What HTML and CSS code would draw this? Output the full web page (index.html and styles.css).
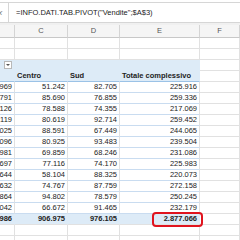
FILE: index.html
```html
<html>
<head>
<title>Pivot</title>
<link rel="stylesheet" href="styles.css">
</head>
<body>
	<div class="formula-bar">
		<span class="fx">fx</span>
		<div class="formula">=INFO.DATI.TAB.PIVOT("Vendite";$A$3)</div>
	</div>

	<div class="sheet">
		<div class="row col-head">
			<div>B</div><div>C</div><div>D</div><div>E</div><div>F</div>
		</div>
		<div class="row"><div></div><div></div><div></div><div></div><div></div></div>
		<div class="row"><div></div><div></div><div></div><div></div><div></div></div>
		<div class="row pv-top">
			<div class="c-filter"><span class="drop"></span></div><div></div><div></div><div></div><div class="f"></div>
		</div>
		<div class="row pv-head">
			<div>Nord</div><div>Centro</div><div>Sud</div><div>Totale complessivo</div><div class="f"></div>
		</div>
		<div class="row pv"><div>91.969</div><div>51.242</div><div>82.705</div><div>225.916</div><div class="f"></div></div>
		<div class="row pv"><div>96.791</div><div>85.690</div><div>76.855</div><div>259.336</div><div class="f"></div></div>
		<div class="row pv"><div>64.126</div><div>78.588</div><div>74.355</div><div>217.069</div><div class="f"></div></div>
		<div class="row pv"><div>86.119</div><div>80.619</div><div>92.714</div><div>259.452</div><div class="f"></div></div>
		<div class="row pv"><div>88.025</div><div>88.591</div><div>67.449</div><div>244.065</div><div class="f"></div></div>
		<div class="row pv"><div>65.096</div><div>80.925</div><div>93.483</div><div>239.504</div><div class="f"></div></div>
		<div class="row pv"><div>92.981</div><div>69.859</div><div>68.246</div><div>231.086</div><div class="f"></div></div>
		<div class="row pv"><div>74.697</div><div>77.116</div><div>74.170</div><div>225.983</div><div class="f"></div></div>
		<div class="row pv"><div>73.644</div><div>58.104</div><div>88.325</div><div>220.073</div><div class="f"></div></div>
		<div class="row pv"><div>109.632</div><div>74.767</div><div>87.759</div><div>272.158</div><div class="f"></div></div>
		<div class="row pv"><div>76.864</div><div>94.802</div><div>78.579</div><div>250.245</div><div class="f"></div></div>
		<div class="row pv"><div>74.042</div><div>66.672</div><div>91.465</div><div>232.179</div><div class="f"></div></div>
		<div class="row pv-total">
			<div>993.986</div><div>906.975</div><div>976.105</div>
			<div class="grand">2.877.066<span class="mark"></span></div>
			<div class="f"></div>
		</div>
		<div class="row"><div></div><div></div><div></div><div></div><div></div></div>
		<div class="row"><div></div><div></div><div></div><div></div><div></div></div>
	</div>
</body>
</html>
```

FILE: styles.css
```css
body {
	margin: 0px;
	background: white;
	font-family: "Liberation Sans", Arial, sans-serif;
	color: #222;
	overflow: hidden;
}

.formula-bar {
	display: flex;
	height: 19px;
	margin-top: 2px;
	border-top: 1px solid #d6d6d6;
	border-bottom: 1px solid #d6d6d6;
	background: white;
}
.fx {
	width: 13px;
	margin-left: -4px;
	font-size: 8px;
	font-style: italic;
	color: #777;
	line-height: 19px;
	border-right: 1px solid #d6d6d6;
	box-sizing: border-box;
}
.formula {
	font-size: 7.5px;
	line-height: 19px;
	padding-left: 7px;
	white-space: nowrap;
}

.sheet {
	margin-left: -38px;
	border-top: 2px solid #f0f0f0;
}

.row {
	display: grid;
	grid-template-columns: 53px 53px 52px 80px 40px;
	height: 11px;
	font-size: 7.5px;
	line-height: 10px;
}
.row > div {
	box-sizing: border-box;
	border-right: 1px solid #e1e1e1;
	border-bottom: 1px solid #e1e1e1;
	padding: 0 2px;
	white-space: nowrap;
	overflow: hidden;
}

.col-head {
	height: 13px;
	background: #f5f5f5;
	color: #555;
}
.col-head > div {
	text-align: center;
	line-height: 12px;
	border-right-color: #d4d4d4;
	border-bottom-color: #c8c8c8;
}

.pv-top > div, .pv-head > div {
	background: #ddebf7;
	border-right-color: #ddebf7;
	border-bottom-color: #ddebf7;
}
.pv-head > div {
	font-weight: bold;
	border-bottom-color: #9bc2e6;
}
.c-filter {
	display: flex;
	justify-content: flex-end;
	align-items: center;
}
.drop {
	width: 6px;
	height: 6px;
	border: 1px solid #b8b8b8;
	background: white;
	position: relative;
}
.drop::after {
	content: "";
	position: absolute;
	left: 1px;
	top: 2px;
	border-left: 2px solid transparent;
	border-right: 2px solid transparent;
	border-top: 2px solid #555;
}

.pv > div, .pv-total > div {
	text-align: right;
	border-bottom-color: #c9dcf0;
}
.pv-total > div {
	background: #ddebf7;
	font-weight: bold;
	border-right-color: #ddebf7;
	border-bottom-color: #e1e1e1;
}
.row > .f {
	background: white;
	border-right-color: #e1e1e1;
	border-bottom-color: #e1e1e1;
}
.grand {
	position: relative;
	overflow: visible !important;
}
.mark {
	position: absolute;
	left: 32px;
	top: -2px;
	width: 51px;
	height: 15px;
	box-sizing: border-box;
	border: 2px solid #e0141e;
	border-radius: 4px;
}
```
